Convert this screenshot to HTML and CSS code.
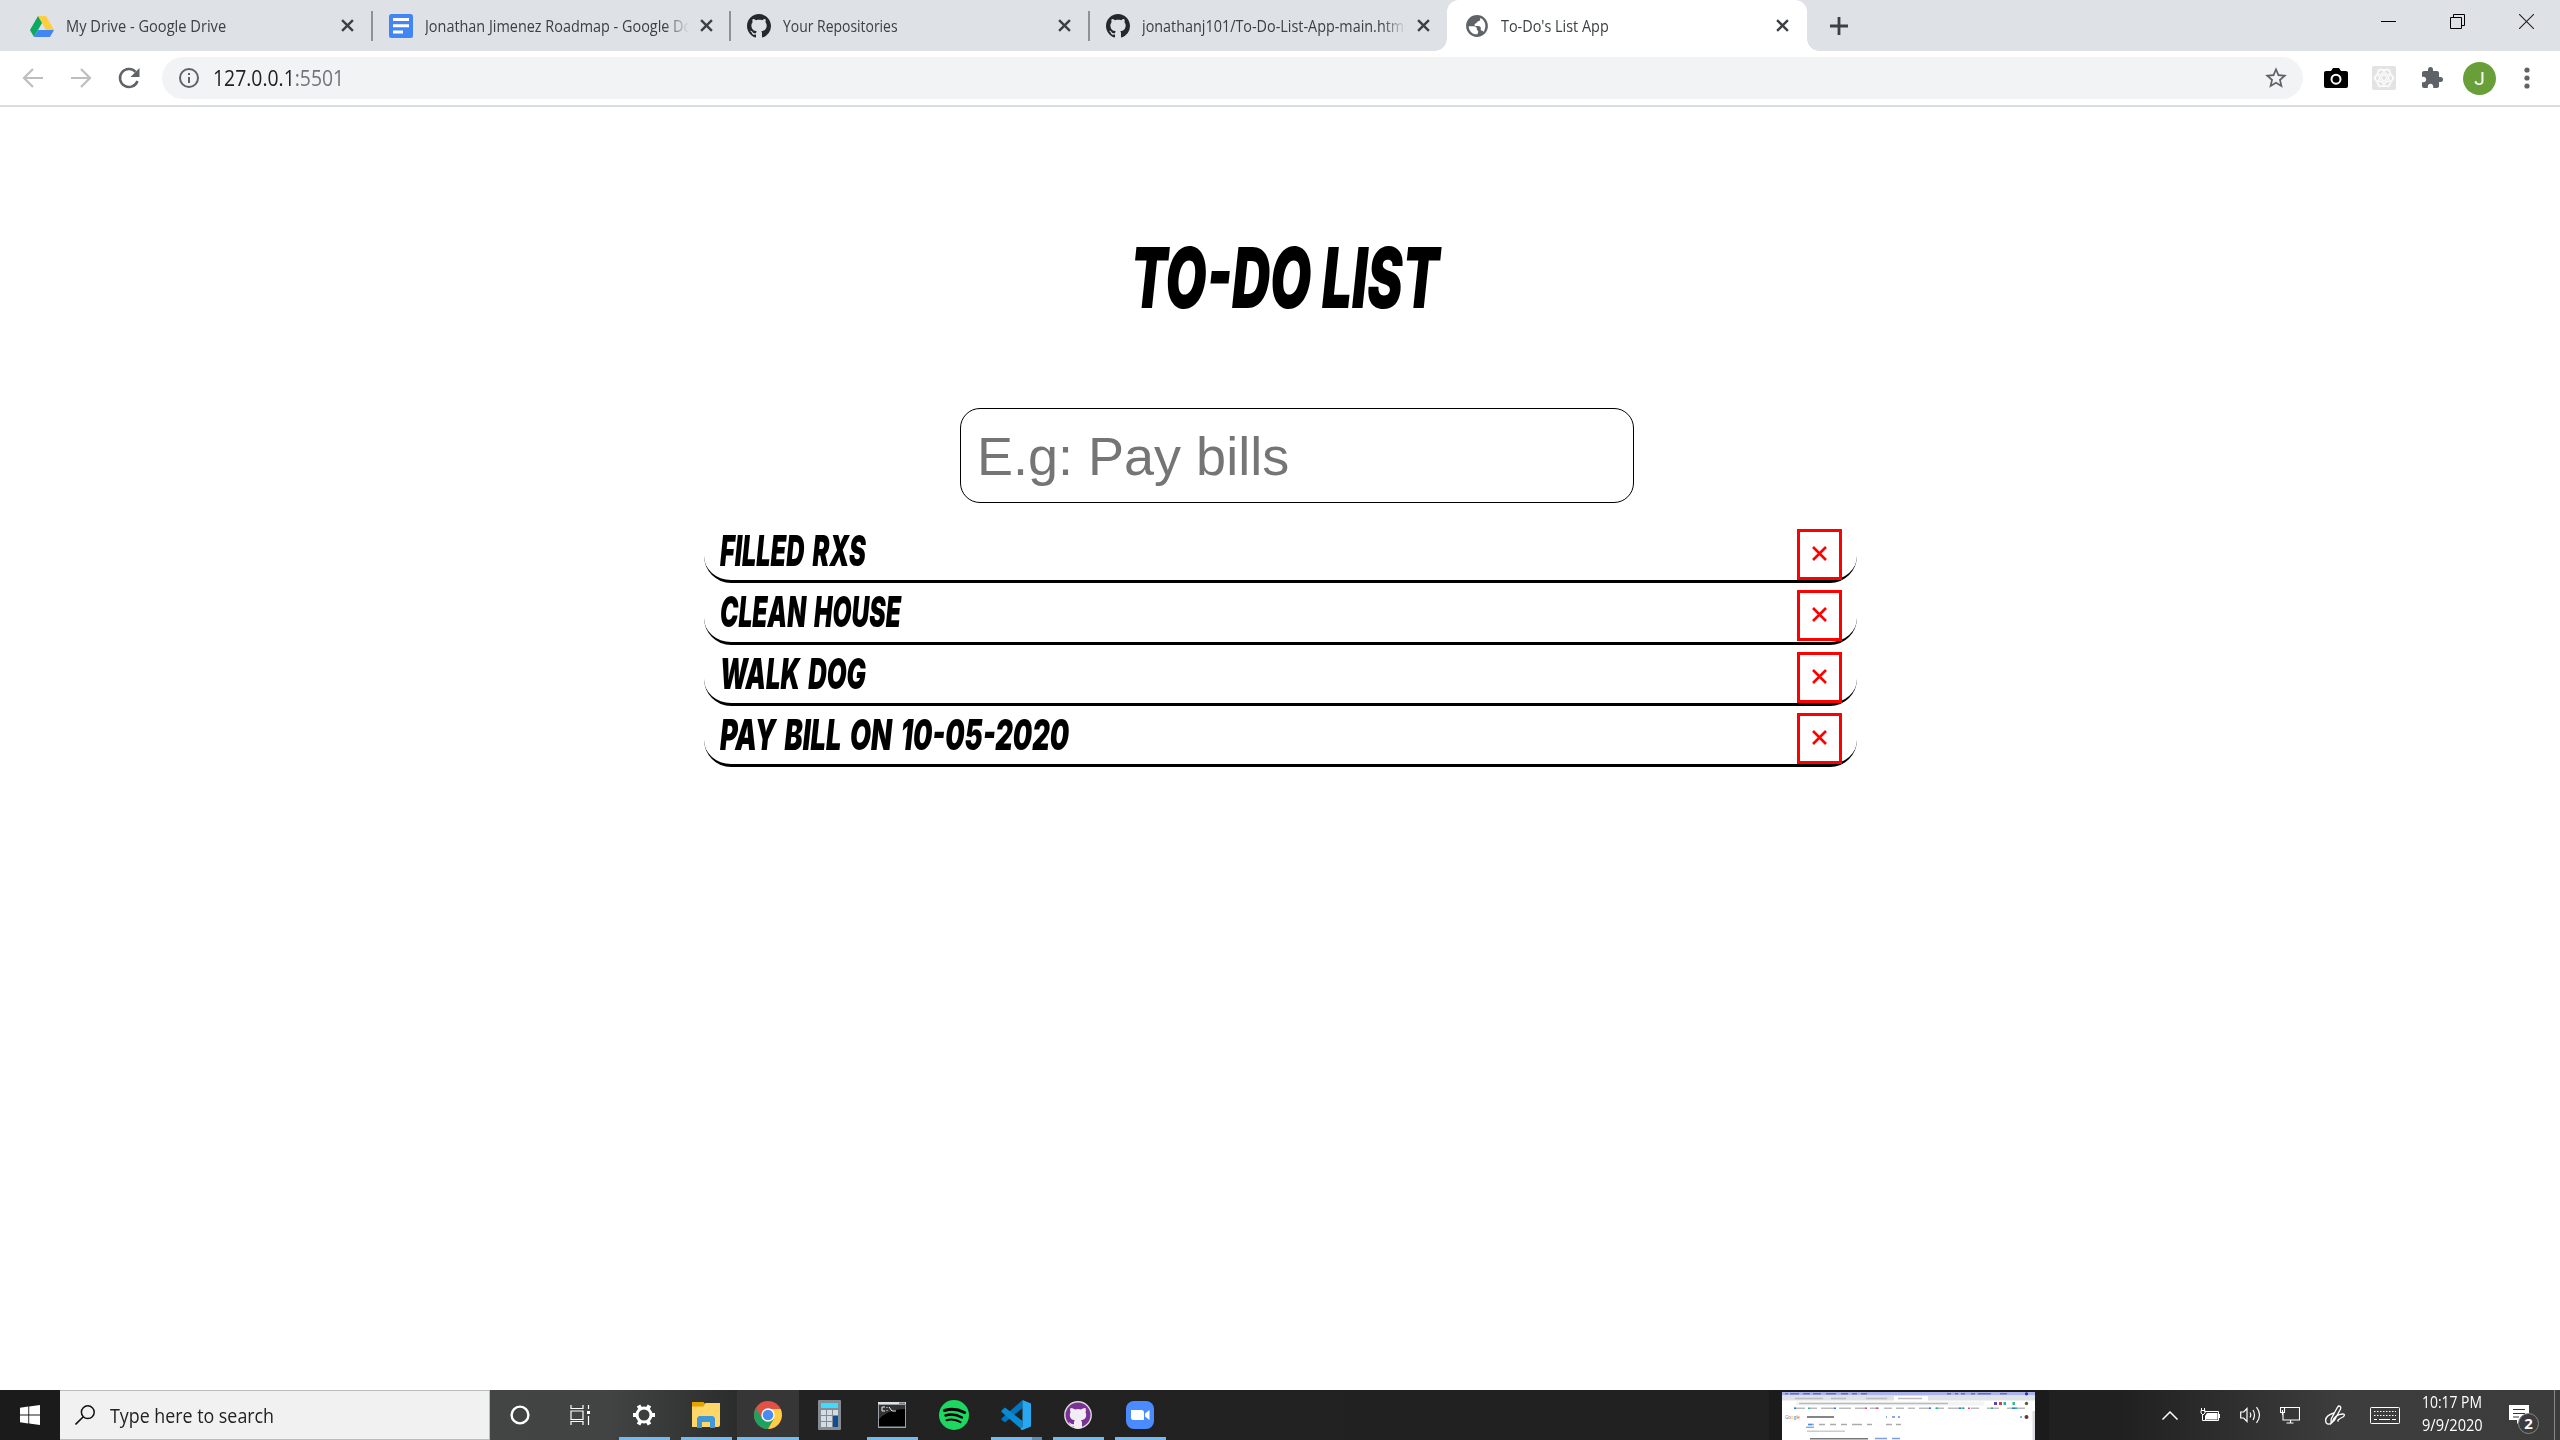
FILE: index.html
```html
<!DOCTYPE html>
<html lang="en">
<head>
<meta charset="utf-8">
<title>To-Do's List App</title>
<link rel="stylesheet" href="styles.css">
</head>
<body>
<svg class="defs" width="0" height="0">
  <symbol id="x" viewBox="0 0 12 12"><path d="M1 1l10 10M11 1L1 11" fill="none" stroke="#3c4043" stroke-width="2.2"/></symbol>
  <symbol id="github" viewBox="0 0 16 16"><path fill-rule="evenodd" d="M8 0C3.58 0 0 3.58 0 8c0 3.54 2.29 6.53 5.47 7.59.4.07.55-.17.55-.38 0-.19-.01-.82-.01-1.49-2.01.37-2.53-.49-2.69-.94-.09-.23-.48-.94-.82-1.13-.28-.15-.68-.52-.01-.53.63-.01 1.08.58 1.23.82.72 1.21 1.87.87 2.33.66.07-.52.28-.87.51-1.07-1.78-.2-3.64-.89-3.64-3.95 0-.87.31-1.59.82-2.15-.08-.2-.36-1.02.08-2.12 0 0 .67-.21 2.2.82.64-.18 1.32-.27 2-.27s1.36.09 2 .27c1.53-1.04 2.2-.82 2.2-.82.44 1.1.16 1.92.08 2.12.51.56.82 1.27.82 2.15 0 3.07-1.87 3.75-3.65 3.95.29.25.54.73.54 1.48 0 1.07-.01 1.93-.01 2.2 0 .21.15.46.55.38A8.01 8.01 0 0 0 16 8c0-4.42-3.58-8-8-8z"/></symbol>
  <symbol id="remove" viewBox="0 0 15 15"><path d="M1 1l13 13M14 1L1 14" fill="none" stroke="#f00" stroke-width="2.6"/></symbol>
</svg>

<header class="browser">
  <div class="tabstrip">
    <div class="tab">
      <svg class="favicon" viewBox="0 0 24 24"><path d="M8 2h8l8 14h-8z" fill="#ffcd40"/><path d="M8 2l4 7-8 14-4-7z" fill="#0da960"/><path d="M8 16h16l-4 7H4z" fill="#4285f4"/></svg>
      <span class="title"><span data-fit="160">My Drive - Google Drive</span></span>
      <svg class="close"><use href="#x"/></svg>
    </div>
    <div class="tab divided">
      <svg class="favicon" viewBox="0 0 24 24"><rect width="24" height="24" rx="2.5" fill="#4285f4"/><path d="M4 5.5h16M4 11.7h16M4 18h10" stroke="#fff" stroke-width="3"/></svg>
      <span class="title fade"><span data-fit="281">Jonathan Jimenez Roadmap - Google Docs</span></span>
      <svg class="close"><use href="#x"/></svg>
    </div>
    <div class="tab divided">
      <svg class="favicon gh"><use href="#github"/></svg>
      <span class="title"><span data-fit="115">Your Repositories</span></span>
      <svg class="close"><use href="#x"/></svg>
    </div>
    <div class="tab divided">
      <svg class="favicon gh"><use href="#github"/></svg>
      <span class="title fade"><span data-fit="266">jonathanj101/To-Do-List-App-main.html</span></span>
      <svg class="close"><use href="#x"/></svg>
    </div>
    <div class="tab active">
      <svg class="favicon" viewBox="1 1 22 22"><path fill="#5f6368" d="M12 2C6.48 2 2 6.48 2 12s4.48 10 10 10 10-4.480 10-10S17.520 2 12 2zM4.400 12.200h4.500c2 0 3 1 3 2.600 0 1.300 1 1.400 1.200 2.200.2.900-.6 1.500-.6 2.600-4.600.5-8-3-8.100-7.400zm13.600 5.200c-.5-1-1.500-1.300-2.500-1.300v-1.800c0-1.500-1-2.200-2.500-2.200h-2c-1.500 0-1.800-1.900-.4-2.400 1.600-.5 1.400-1.800 2.600-2 1.300-.2 1.900-.9 1.700-3 4.400 1.600 6.500 7.600 3.100 12.700z"/></svg>
      <span class="title"><span data-fit="108">To-Do's List App</span></span>
      <svg class="close"><use href="#x"/></svg>
    </div>
    <svg class="newtab" viewBox="0 0 18 18"><path d="M9 0v18M0 9h18" stroke="#3c4043" stroke-width="2.8"/></svg>
    <div class="winbuttons">
      <svg viewBox="0 0 15 15"><path d="M0 7.500h15" stroke="#000"/></svg>
      <svg viewBox="0 0 15 15"><path d="M.5 3.500h11v11H.5zM3.500 3.500v-3h11v11h-3" fill="none" stroke="#000"/></svg>
      <svg viewBox="0 0 15 15"><path d="M0 0l15 15M15 0L0 15" stroke="#222" stroke-width="1.100"/></svg>
    </div>
  </div>
  <div class="toolbar">
    <div class="nav">
      <svg viewBox="0 0 24 24" fill="none" stroke="#bcbec1" stroke-width="2.200"><path d="M22 12H3.500M12 3l-9 9 9 9"/></svg>
      <svg viewBox="0 0 24 24" fill="none" stroke="#bcbec1" stroke-width="2.200"><path d="M2 12h18.500M12 3l9 9-9 9"/></svg>
      <svg viewBox="0 0 24 24"><path d="M20.500 15A9 9 0 1 1 18.500 5.800" fill="none" stroke="#5f6368" stroke-width="2.500"/><path d="M22.500 2v9h-9z" fill="#5f6368"/></svg>
    </div>
    <div class="omnibox">
      <svg class="info" viewBox="0 0 20 20"><circle cx="10" cy="10" r="9" fill="none" stroke="#5f6368" stroke-width="2"/><path d="M10 9v6M10 5v2" stroke="#5f6368" stroke-width="2"/></svg>
      <span class="url"><span data-fit="131">127.0.0.1<span class="port">:5501</span></span></span>
      <svg class="star" viewBox="0 0 24 24"><path fill="#5f6368" d="M22 9.240l-7.190-.62L12 2 9.190 8.630 2 9.240l5.460 4.730L5.820 21 12 17.270 18.180 21l-1.630-7.030L22 9.240zM12 15.400l-3.760 2.270 1-4.280-3.320-2.880 4.380-.38L12 6.100l1.710 4.040 4.380.38-3.320 2.880 1 4.280L12 15.400z"/></svg>
    </div>
    <div class="extensions">
      <svg viewBox="0 0 24 24"><path d="M2 5h5l2-3h6l2 3h5q2 0 2 2v13q0 2-2 2H2q-2 0-2-2V7q0-2 2-2z"/><circle cx="12" cy="13.200" r="4.500" fill="none" stroke="#fff" stroke-width="2"/></svg>
      <svg viewBox="0 0 24 24"><rect width="24" height="24" rx="2" fill="#e3e3e3"/><g fill="none" stroke="#fff" stroke-width="1"><ellipse cx="12" cy="12" rx="10" ry="4"/><ellipse cx="12" cy="12" rx="10" ry="4" transform="rotate(60 12 12)"/><ellipse cx="12" cy="12" rx="10" ry="4" transform="rotate(120 12 12)"/><circle cx="12" cy="12" r="2.500"/><circle cx="12" cy="12" r="8.500"/></g></svg>
      <svg viewBox="0 0 24 24"><path fill="#5f6368" d="M20.500 11H19V7c0-1.100-.9-2-2-2h-4V3.500a2.500 2.500 0 0 0-5 0V5H4c-1.100 0-1.990.9-1.990 2v3.800H3.500c1.490 0 2.700 1.210 2.700 2.700s-1.210 2.700-2.700 2.700H2V20c0 1.100.9 2 2 2h3.800v-1.500c0-1.490 1.210-2.700 2.700-2.700s2.700 1.210 2.700 2.700V22H17c1.100 0 2-.9 2-2v-4h1.500a2.500 2.500 0 0 0 0-5z"/></svg>
      <span class="avatar">J</span>
      <svg class="dots" viewBox="0 0 6 22"><g fill="#5f6368"><circle cx="3" cy="3" r="2.600"/><circle cx="3" cy="11" r="2.600"/><circle cx="3" cy="19" r="2.600"/></g></svg>
    </div>
  </div>
</header>

<main class="page">
  <h1 class="heading"><span data-fit="308">TO-DO LIST</span></h1>
  <input class="entry" type="text" placeholder="E.g: Pay bills">
  <ul class="todos">
    <li><span class="task"><span data-fit="146">FILLED RXS</span></span><button><svg><use href="#remove"/></svg></button></li>
    <li><span class="task"><span data-fit="181">CLEAN HOUSE</span></span><button><svg><use href="#remove"/></svg></button></li>
    <li><span class="task"><span data-fit="146">WALK DOG</span></span><button><svg><use href="#remove"/></svg></button></li>
    <li><span class="task"><span data-fit="349">PAY BILL ON 10-05-2020</span></span><button><svg><use href="#remove"/></svg></button></li>
  </ul>
</main>

<footer class="taskbar">
  <div class="start"><svg viewBox="0 0 20 20" width="20" height="20"><path fill="#fff" d="M0 2.800L8.300 1.600v7.900H0zM9.200 1.500L20 0v9.500H9.200zM0 10.500h8.300v7.900L0 17.200zM9.200 10.500H20V20L9.200 18.500z"/></svg></div>
  <div class="search">
    <svg viewBox="0 0 20 20" width="20" height="20"><circle cx="12.800" cy="7.200" r="6.400" fill="none" stroke="#111" stroke-width="1.500"/><path d="M8.300 11.800L.5 19.500" stroke="#111" stroke-width="1.600"/></svg>
    <span><span data-fit="164">Type here to search</span></span>
  </div>
  <div class="apps">
    <div class="app sys"><svg viewBox="0 0 20 20" width="20" height="20"><circle cx="10" cy="10" r="8.400" fill="none" stroke="#fff" stroke-width="2.400"/></svg></div>
    <div class="app sys2"><svg viewBox="0 0 21 20" width="21" height="20"><path d="M1 0v3.500h12V0M1 6h12v8.500H1zM1 20v-3.500h12V20M18.500 0v4M18.500 11v9" fill="none" stroke="#fff" stroke-width="1.200"/><path d="M17 6h3v3h-3z" fill="#fff"/></svg></div>
    <div class="app on"><svg viewBox="0 0 24 24" width="24" height="24"><circle cx="12" cy="12" r="7" fill="none" stroke="#fff" stroke-width="3"/><path d="M18.500 12H23M1 12h4.500M15.250 6.370l2.250-3.900M6.500 21.530l2.250-3.900M8.750 6.370l-2.250-3.900M17.500 21.530l-2.250-3.900" stroke="#fff" stroke-width="4"/></svg></div>
    <div class="app on"><svg viewBox="0 0 28 26" width="28" height="26"><path d="M0 2h12l2-1h14v22q0 2-2 2H0z" fill="#ffd768"/><path d="M0 0h11.500l1.500 2-1.500 2.500H0z" fill="#e8a200"/><path d="M5 26V16l2-2h14l2 2v10h-5v-6h-8v6z" fill="#3f98d8"/></svg></div>
    <div class="app on current"><svg viewBox="0 0 28 28" width="28" height="28"><circle cx="14" cy="14" r="14" fill="#e05244"/><path d="M1.900 7A14 14 0 0 0 14 28l6.100-10.500L14 20 7.900 17.500z" fill="#1da261"/><path d="M14 8h12.600A14 14 0 0 1 14 28l6-10.500z" fill="#ffcd46"/><circle cx="14" cy="14" r="6.700" fill="#fff"/><circle cx="14" cy="14" r="5.300" fill="#4a8af4"/></svg></div>
    <div class="app"><svg viewBox="0 0 23 30" width="23" height="30"><rect width="23" height="30" rx="1" fill="#858d94"/><path d="M3 3h17v5H3z" fill="#3ddcff"/><path d="M3 10h5v5H3zM9 10h5v5H9zM15 10h5v5h-5zM3 16h5v5H3zM9 16h5v5H9zM3 22h5v5H3zM9 22h5v5H9z" fill="#d5dbe2"/><path d="M15 16h5v11h-5z" fill="#0f4c93"/></svg></div>
    <div class="app on"><svg viewBox="0 0 28 26" width="28" height="26"><path d="M0 0h28v26H0z" fill="#9aa0a5"/><path d="M1 3h26v21.500H1z"/><path d="M1 3h26v4C16 7 7 11 1 17z" fill="#333"/><path d="M0 0h28v2H0z" fill="#dfe3e6"/><path d="M21 .5h6v1.500h-6z" fill="#778"/><path d="M7 5H4v4h3M9 5v1M9 8v1M11 5l3 4M14 9h4" fill="none" stroke="#eee" stroke-width="1"/></svg></div>
    <div class="app"><svg viewBox="0 0 30 30" width="30" height="30"><circle cx="15" cy="15" r="15" fill="#1ed760"/><path d="M5.500 10.500q10-3.300 20 2" stroke="#000" stroke-width="3" fill="none" stroke-linecap="round"/><path d="M6.500 15.500q8.500-2.500 16.500 2" stroke="#000" stroke-width="2.500" fill="none" stroke-linecap="round"/><path d="M7.500 20.200q7.500-2 14 2" stroke="#000" stroke-width="2" fill="none" stroke-linecap="round"/></svg></div>
    <div class="app on stacked"><svg viewBox="0 0 30 30" width="30" height="30"><path d="M21.500 0v8L4 22.500l-3.500-2.700v-1.300z" fill="#0076be"/><path d="M.5 10.500L4 7.600 21.500 21v9L.5 12z" fill="#0b8ad4"/><path d="M21.500 0L30 3.500v23L21.500 30q-1.500 0-2-1l2-2z" fill="#29a8ef"/></svg></div>
    <div class="app on"><svg viewBox="0 0 28 28" width="28" height="28"><circle cx="14" cy="14" r="13.200" fill="#7b3297" stroke="#ddd" stroke-width="1.400"/><path d="M6.500 7q3 0 4.500 1.500 3-.8 6 0Q18.500 7 21.500 7q.8 2.500 0 4.300 1 2 .5 4.200-.5 3-5 3.800l1 2V27q-4 1.300-8 0v-2c-4 1-3.500-2-5.500-3.500 2.500-.5 2.500 2.500 5.500 1.500v-2l.7-1.700Q6.500 18.500 6 15.500q-.5-2 .5-4.200-.8-2 0-4.300z" fill="#f1edf3"/></svg></div>
    <div class="app on"><svg viewBox="0 0 28 28" width="28" height="28"><rect width="28" height="28" rx="8" fill="#4a8cff"/><path d="M5 9h10.500q2.500 0 2.500 2.500V19H7.500Q5 19 5 16.500zM19 12.500l4.500-3.500v10L19 15.500z" fill="#fff"/></svg></div>
  </div>
  <div class="preview">
    <svg viewBox="0 0 253 48" width="253" height="48">
      <path d="M0 0h253v48H0z" fill="#fff"/><path d="M0 0h253v3.500H0z" fill="#aab4ea"/><path d="M0 3.500h253v5H0z" fill="#dee1e6"/><path d="M112 4h34v5h-34z" fill="#fff"/><path d="M250.500 19h2.500v29h-2.500z" fill="#dcdde0"/><path d="M14 9.500h188v4H14z" fill="#f1f3f4"/>
      <g class="blurred" fill="none" stroke-width="1.600">
        <path d="M3 1.800h3m2 0h9m4 0h7m3 0h8m5 0h10m5 0h7m4 0h5m4 0h6m80 0h4m4 0h3m3 0h4m6 0h4m3 0h13m9 0h7" stroke="#6873ae"/>
        <path d="M13 6.500h28m8 0h15m20 0h21m11 0h24M17 11.500h149" stroke="#bbb"/>
        <path d="M12 16.300h11m5 0h7m4 0h13m5 0h12m4 0h11m4 0h9m5 0h8m4 0h8m4 0h7m4 0h12m4 0h9m4 0h17m6 0h8m8 0h12m8 0h18" stroke="#bbb"/>
        <path d="M12 16.300h2m38 0h2m93 0h2m28 0h2m51 0h3" stroke="#3474e0"/><path d="M26 16.300h2m126 0h2m24 0h2m27 0h2m22 0h2" stroke="#24b78a"/><path d="M83 16.300h2m9 0h2m90 0h2" stroke="#e84868"/>
        <path d="M25 25h27" stroke="#666"/><path d="M104 25h1m5 0h3m3 0h2m120 0h2" stroke="#5b8fe8"/>
        <path d="M29 32.500h3m5 0h6m5 0h6m5 0h6m5 0h10m5 0h5m14 0h6m4 0h5" stroke="#aaa"/><path d="M24 35.200h8" stroke="#438bef" stroke-width="1"/><path d="M26 32.500h4" stroke="#438bef"/>
        <path d="M25 39.200h38" stroke="#ccc"/><path d="M28 46.800h58" stroke="#777"/><path d="M93 46.500h12m5 0h8" stroke="#849ddc"/>
      </g>
      <circle cx="244.500" cy="1.800" r="1.600" fill="#2330a4"/><path d="M212 10h3v3h-3z" fill="#6940a8"/><path d="M217 10h3v3h-3z" fill="#c54444"/><path d="M221.500 10h2.500v3h-2.500z" fill="#2ab0b5"/><path d="M230.500 10h2.500v3h-2.500z" fill="#35bd83"/><circle cx="244.500" cy="11.500" r="1.700" fill="#654"/><circle cx="244.500" cy="25" r="2" fill="#643e34"/>
      <text x="3" y="26.500" font-size="4.500" font-family="Open Sans, sans-serif" fill="#4285f4">G<tspan fill="#ea4335">o</tspan><tspan fill="#fbbc05">o</tspan>g<tspan fill="#34a853">l</tspan><tspan fill="#ea4335">e</tspan></text>
    </svg>
  </div>
  <div class="tray">
    <svg viewBox="0 0 16 9" width="16" height="9" class="t1"><path d="M.5 8.500L8 1l7.500 7.500" fill="none" stroke="#fff" stroke-width="1.500"/></svg>
    <svg viewBox="0 0 20 14" width="20" height="14" class="t2"><path d="M4.500 3.500h14v9H5.500V9" fill="none" stroke="#fff"/><path d="M7 5h10.500v6.500H5V8zM19 6h1v4h-1z" fill="#fff"/><path d="M1 2.500h4V5L3 7 1 5zM1.500 0v2.500M4.500 0v2.500M2.500 7v5.500h3" fill="none" stroke="#fff"/></svg>
    <svg viewBox="0 0 21 18" width="21" height="18" class="t3"><path d="M.7 6h3L7 2.500v13L3.700 12h-3zM10 6.500q1.500 2.500 0 5M13 4q3 5 0 10M16.500 1.200q6 7.800 0 15.600" fill="none" stroke="#fff" stroke-width="1.200"/></svg>
    <svg viewBox="0 0 20 17" width="20" height="17" class="t4"><path d="M4 .5h15.500v12.500H3V6M10.500 13v3M6.500 16h7M.5.5h4v5h-4zM2.500 3v5" fill="none" stroke="#fff" stroke-width="1.100"/></svg>
    <svg viewBox="0 0 20 20" width="20" height="20" class="t5"><path d="M13.500 1q3 0 2 3L9.500 15l-3.500 3.500.2-4.500L12 3zM9 8q-9 2.500-8.300 8.200C1 20 6 20 7.500 16.500q2.500-7 10-7.500c3-.2 2 2.500-.5 3.500-3 1.400-5.300 3.300-3.500 4" fill="none" stroke="#fff" stroke-width="1.300"/></svg>
    <svg viewBox="0 0 30 17" width="30" height="17" class="t6"><rect x=".5" y=".5" width="29" height="16" rx=".8" fill="none" stroke="#fff"/><path d="M4 4.500h22M4 8.500h22" stroke="#fff" stroke-dasharray="1.500 1.500"/><path d="M4 12.500h3m2 0h11m2 0h4" stroke="#fff"/></svg>
    <div class="clock"><span><span data-fit="60">10:17 PM</span></span><span><span data-fit="61">9/9/2020</span></span></div>
    <div class="notices">
      <svg viewBox="0 0 20 20" width="20" height="20"><path d="M0 0h20v15H12l-4 4v-4H0z" fill="#fff"/><path d="M4 4.500h12M4 8.500h12M4 12h6" stroke="#333" stroke-width="1.200"/></svg>
      <span class="count">2</span>
    </div>
    <i class="peek"></i>
  </div>
</footer>
<script src="fit.js"></script>
</body>
</html>
```
FILE: styles.css
```css
* { box-sizing: border-box; }
html, body { margin: 0; height: 100%; }
body {
  display: flex; flex-direction: column; height: 1440px; overflow: hidden;
  background: #fff; color: #000; font-family: "Open Sans", "Noto Sans", sans-serif;
}
svg { display: block; flex: none; }
.defs { position: absolute; }
[data-fit] { display: inline-block; white-space: nowrap; transform-origin: 0 50%; }

/* Browser window */
.browser { flex: none; height: 107px; border-bottom: 2px solid #dadce0; background: #fff; }
.tabstrip { display: flex; height: 51px; padding-left: 12px; background: #dee1e6; }
.tab { position: relative; display: flex; align-items: center; flex: none; width: 358.700px; height: 51px; padding-left: 18px; color: #3c4043; }
.divided::before { content: ""; position: absolute; left: 0; top: 11px; width: 2px; height: 30px; background: #8f9296; }
.favicon { width: 24px; height: 24px; }
.gh { fill: #24292e; }
.title { width: 264px; margin-left: 12px; overflow: hidden; font-size: 16px; line-height: 24px; padding-top: 1px; }
.fade { -webkit-mask-image: linear-gradient(90deg, #000 240px, transparent 264px); mask-image: linear-gradient(90deg, #000 240px, transparent 264px); }
.close { width: 13px; height: 13px; margin-left: 11px; }
.active { width: 360px; background: #fff; border-radius: 12px 12px 0 0; }
.active::before, .active::after { content: ""; position: absolute; bottom: 0; width: 12px; height: 12px; }
.active::before { left: -12px; background: radial-gradient(circle at 0 0, transparent 11.500px, #fff 12px); }
.active::after { right: -12px; background: radial-gradient(circle at 100% 0, transparent 11.500px, #fff 12px); }
.newtab { width: 18px; height: 18px; margin: 17px 0 0 23px; }
.winbuttons { display: flex; gap: 54px; margin: 14px 26px 0 auto; }
.winbuttons svg { width: 15px; height: 15px; }

.toolbar { display: flex; align-items: center; height: 54px; }
.nav { display: flex; gap: 24px; width: 162px; padding-left: 21px; }
.nav svg { width: 24px; height: 24px; }
.omnibox { display: flex; align-items: center; width: 2141px; height: 42px; padding: 0 14px 0 17px; border-radius: 21px; background: #f1f3f4; }
.info { width: 20px; height: 20px; }
.url { margin-left: 14px; font-size: 21px; line-height: 30px; color: #202124; }
.port { color: #70757a; }
.star { width: 26px; height: 26px; margin-left: auto; }
.extensions { display: flex; align-items: center; flex: 1; gap: 24px; padding-left: 21px; }
.extensions svg { width: 24px; height: 24px; }
.avatar { flex: none; width: 33px; height: 33px; margin-left: -5px; border-radius: 50%; background: #689f38; color: #fff; font: 19px/33px Roboto, sans-serif; text-align: center; }
.extensions .dots { width: 6px; height: 22px; margin-left: 4px; }

/* To-do page */
.page { flex: 1; min-height: 0; padding: 128px 703px 0 704px; }
.heading { margin: 0 0 0 427px; height: 86px; font: italic 900 84px/86px "Inter", sans-serif; }
.entry { display: block; width: 674px; height: 95px; margin: 87px 0 19px 256px; padding: 0 16px; border: 1px solid #000; border-radius: 20px; background: #fff; font: 54px "Liberation Sans", Arial, sans-serif; }
.entry::placeholder { color: #757575; opacity: 1; }
.todos { margin: 0; padding: 0; list-style: none; }
.todos li { display: flex; justify-content: space-between; height: 61.330px; padding: 7px 15px 0 16px; border-bottom: 3px solid #000; border-radius: 27px; }
.task { font: italic 900 42px/43px "Inter", sans-serif; word-spacing: 5px; }
.todos button { display: flex; align-items: center; justify-content: center; width: 45px; height: 51px; padding: 0 0 2px; border: 3px solid #f00; background: none; }
.todos button svg { width: 15px; height: 15px; }

/* Windows taskbar */
.taskbar { display: flex; flex: none; height: 50px; color: #fff; background: linear-gradient(90deg, #434545 490px, #424444 610px, #222 790px, #202020 2120px, #3d3d3d 2340px, #3c3c3c); }
.start { display: flex; align-items: center; width: 60px; padding-left: 20px; background: #1b1b1b; }
.search { display: flex; align-items: center; width: 430px; padding-left: 15px; gap: 15px; border: 1px solid #bbb; border-left: 0; background: #f1f1f1; color: #222; font-size: 20px; }
.apps { display: flex; width: 1279px; padding-right: 1px; }
.app { position: relative; display: flex; align-items: center; justify-content: center; width: 62px; padding-right: 1px; }
.sys { width: 60px; padding-right: 0; }
.sys2 { width: 63px; padding-right: 3px; }
.on::after { content: ""; position: absolute; left: 6px; bottom: 0; width: 51px; height: 3px; background: #76b9ed; }
.current { background: #363636; }
.current::after { left: 0; width: 62px; }
.stacked::after { background: linear-gradient(90deg, #76b9ed 41px, #5d8db4 41px); }
.preview { width: 280px; padding: 2px 0 0 13px; background: #1b1b1b; }
.blurred { filter: blur(.5px); }
.tray { display: flex; align-items: center; flex: 1; }
.t1 { margin-left: 113px; }
.t2 { margin-left: 22px; }
.t3 { margin-left: 20px; }
.t4 { margin-left: 19px; }
.t5 { margin-left: 25px; }
.t6 { margin-left: 25px; }
.clock { display: flex; flex-direction: column; width: 60px; margin-left: 22px; font-size: 16px; line-height: 23px; padding-bottom: 2px; }
.notices { position: relative; margin: 0 0 0 27px; }
.count { position: absolute; left: 9px; top: 8px; width: 21px; height: 21px; border: 1.500px solid #888; border-radius: 50%; background: #3c3c3c; font: bold 15px/18px "Open Sans", sans-serif; text-align: center; }
.peek { width: 1px; height: 50px; margin-left: 25px; background: #888; }
```
FILE: fit.js
```js
// Condense each label horizontally to the width named in its data-fit attribute.
document.querySelectorAll('[data-fit]').forEach(function (label) {
  var scale = Number(label.dataset.fit) / label.offsetWidth;
  label.style.transform = 'scaleX(' + scale + ')';
});
```
